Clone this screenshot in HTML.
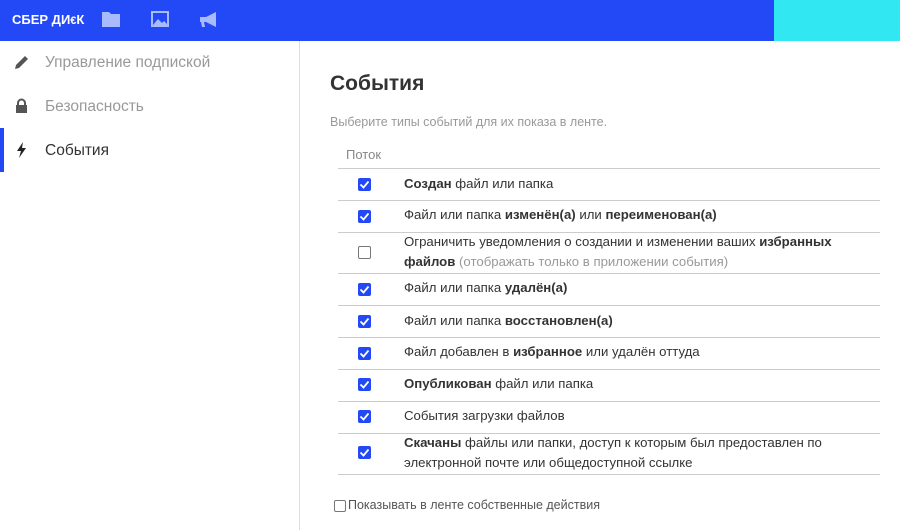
<!DOCTYPE html>
<html><head><meta charset="utf-8"><style>
*{margin:0;padding:0;box-sizing:border-box}
body{width:914px;height:530px;background:#fff;font-family:"Liberation Sans",sans-serif;position:relative;overflow:hidden;color:#333}
.hdr{position:absolute;left:0;top:0;width:900px;height:41px;background:#2348f5}
.cy{position:absolute;left:774px;top:0;width:126px;height:41px;background:#31e8f2}
.logo{position:absolute;left:12px;top:12px;color:#fff;font-weight:bold;font-size:13px;letter-spacing:0}
.side{position:absolute;left:0;top:41px;width:300px;height:489px;border-right:1px solid #ddd}
.si{position:absolute;left:45px;font-size:15.5px;color:#999}
.ic{position:absolute;left:14px}
h1{position:absolute;left:330px;top:72px;font-size:21px;font-weight:bold;color:#333}
.sub{position:absolute;left:330px;top:115px;font-size:12.5px;color:#999}
.pt{position:absolute;left:346px;top:147px;font-size:13px;color:#888}
.row{position:absolute;left:338px;width:542px;border-top:1px solid #ccc;font-size:13.2px;color:#333;line-height:21px}
.row .t{position:absolute;left:66px}
.cb{position:absolute;left:20px;width:13px;height:13px;background:#2348f5;border-radius:2px}
.cb svg{position:absolute;left:1px;top:1px}
.cb.e{background:#fff;border:1px solid #777}
b{font-weight:bold}
.g{color:#999}
</style></head><body>
<div class="hdr"></div><div class="cy"></div>
<div class="logo">СБЕР ДИ<span style="font-size:11px">€</span>К</div>
<svg style="position:absolute;left:102px;top:11px" width="18" height="16"><path d="M0 1h7l2 2h9v13H0z" fill="#a9bbff"/></svg>
<svg style="position:absolute;left:151px;top:11px" width="18" height="16"><rect x="1" y="1" width="16" height="14" fill="none" stroke="#a9bbff" stroke-width="2"/><path d="M2 14l5-6 4 4 2-2 4 4z" fill="#a9bbff"/></svg>
<svg style="position:absolute;left:199px;top:11px" width="20" height="17"><path d="M1 6h6l10-5v15L7 11H5l1 5H3l-1-5H1z" fill="#a9bbff"/></svg>
<div class="side">
<svg class="ic" style="top:13px" width="16" height="16"><path d="M1 15l1-4 9-9 3 3-9 9z" fill="#555"/></svg>
<div class="si" style="top:13px">Управление подпиской</div>
<svg class="ic" style="top:57px" width="16" height="16"><rect x="2" y="7" width="11" height="8" fill="#555"/><path d="M4 7V5a3.5 3.5 0 017 0v2" fill="none" stroke="#555" stroke-width="2"/></svg>
<div class="si" style="top:57px">Безопасность</div>
<div style="position:absolute;left:0;top:87px;width:4px;height:44px;background:#2348f5"></div>
<svg class="ic" style="top:101px;left:16px" width="12" height="16"><path d="M7 0L1 9h4l-2 7 7-10H6z" fill="#222"/></svg>
<div class="si" style="top:101px;color:#333">События</div>
</div>
<h1>События</h1>
<div class="sub">Выберите типы событий для их показа в ленте.</div>
<div class="pt">Поток</div>
<div class="row" style="top:168px;height:32px"><div class="cb" style="top:9px"><svg width="11" height="11"><path d="M1.5 5.5l3 3 5-6" stroke="#fff" stroke-width="1.8" fill="none"/></svg></div><div class="t" style="top:4px"><b>Создан</b> файл или папка</div></div>
<div class="row" style="top:200px;height:32px"><div class="cb" style="top:9px"><svg width="11" height="11"><path d="M1.5 5.5l3 3 5-6" stroke="#fff" stroke-width="1.8" fill="none"/></svg></div><div class="t" style="top:3px">Файл или папка <b>изменён(а)</b> или <b>переименован(а)</b></div></div>
<div class="row" style="top:232px;height:41px"><div class="cb e" style="top:13px"></div><div class="t" style="top:-1px;line-height:20px">Ограничить уведомления о создании и изменении ваших <b>избранных<br>файлов</b> <span class="g">(отображать только в приложении события)</span></div></div>
<div class="row" style="top:273px;height:32px"><div class="cb" style="top:9px"><svg width="11" height="11"><path d="M1.5 5.5l3 3 5-6" stroke="#fff" stroke-width="1.8" fill="none"/></svg></div><div class="t" style="top:3px">Файл или папка <b>удалён(а)</b></div></div>
<div class="row" style="top:305px;height:32px"><div class="cb" style="top:9px"><svg width="11" height="11"><path d="M1.5 5.5l3 3 5-6" stroke="#fff" stroke-width="1.8" fill="none"/></svg></div><div class="t" style="top:4px">Файл или папка <b>восстановлен(а)</b></div></div>
<div class="row" style="top:337px;height:32px"><div class="cb" style="top:9px"><svg width="11" height="11"><path d="M1.5 5.5l3 3 5-6" stroke="#fff" stroke-width="1.8" fill="none"/></svg></div><div class="t" style="top:3px">Файл добавлен в <b>избранное</b> или удалён оттуда</div></div>
<div class="row" style="top:369px;height:32px"><div class="cb" style="top:8px"><svg width="11" height="11"><path d="M1.5 5.5l3 3 5-6" stroke="#fff" stroke-width="1.8" fill="none"/></svg></div><div class="t" style="top:3px"><b>Опубликован</b> файл или папка</div></div>
<div class="row" style="top:401px;height:32px"><div class="cb" style="top:8px"><svg width="11" height="11"><path d="M1.5 5.5l3 3 5-6" stroke="#fff" stroke-width="1.8" fill="none"/></svg></div><div class="t" style="top:3px">События загрузки файлов</div></div>
<div class="row" style="top:433px;height:42px;border-bottom:1px solid #ccc"><div class="cb" style="top:12px"><svg width="11" height="11"><path d="M1.5 5.5l3 3 5-6" stroke="#fff" stroke-width="1.8" fill="none"/></svg></div><div class="t" style="top:-1px;line-height:20px"><b>Скачаны</b> файлы или папки, доступ к которым был предоставлен по<br>электронной почте или общедоступной ссылке</div></div>
<div style="position:absolute;left:334px;top:500px;width:12px;height:12px;border:1px solid #777;border-radius:2px"></div>
<div style="position:absolute;left:348px;top:498px;font-size:12.5px;color:#555">Показывать в ленте собственные действия</div>
</body></html>
